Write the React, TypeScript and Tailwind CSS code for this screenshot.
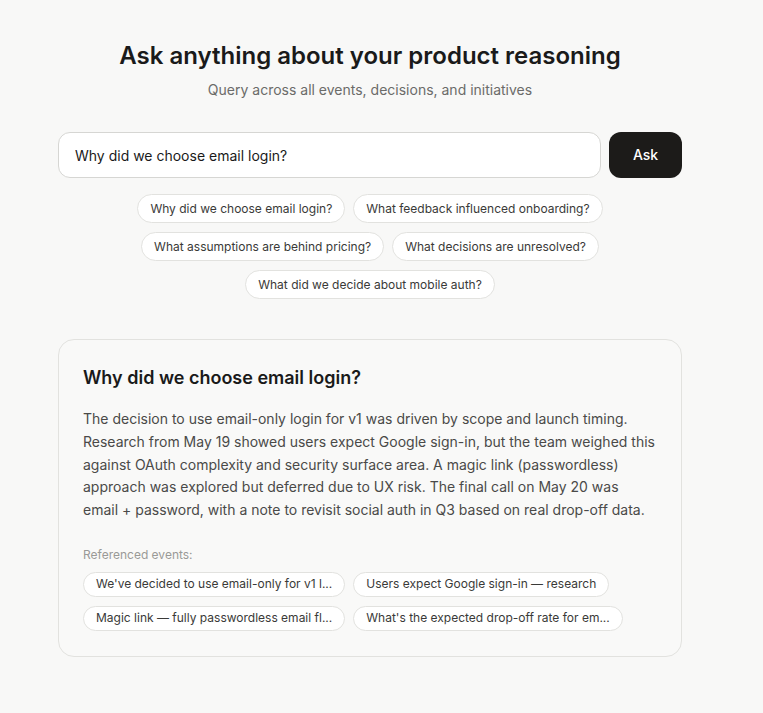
const suggestions = [
  "Why did we choose email login?",
  "What feedback influenced onboarding?",
  "What assumptions are behind pricing?",
  "What decisions are unresolved?",
  "What did we decide about mobile auth?",
]

const referenced = [
  "We've decided to use email-only for v1 l...",
  "Users expect Google sign-in — research",
  "Magic link — fully passwordless email fl...",
  "What's the expected drop-off rate for em...",
]

const App = () => {
  return (
    <div className="min-h-[713px] bg-[#f8f8f7] font-['Inter','Liberation_Sans',sans-serif] text-[#1a1a1a]">
      <div className="w-[740px] flex justify-center pt-10 pb-14">
        <div className="w-[624px] flex flex-col">
          {/* Header */}
          <h1 className="text-center text-2xl leading-8 font-semibold">
            Ask anything about your product reasoning
          </h1>
          <p className="text-center text-sm leading-5 text-[#6b6b69] mt-2">
            Query across all events, decisions, and initiatives
          </p>

          {/* Query */}
          <div className="flex gap-2 mt-8">
            <input
              defaultValue="Why did we choose email login?"
              className="flex-1 h-[46px] rounded-xl border border-[#d6d6d3] bg-white px-4 text-sm text-[#1a1a1a] outline-none"
            />
            <button className="w-[73px] h-[46px] rounded-xl bg-[#1c1b19] text-white text-sm font-medium">
              Ask
            </button>
          </div>

          {/* Suggestions */}
          <div className="flex flex-wrap justify-center gap-x-2 gap-y-[9px] mt-4">
            {suggestions.map((s) => (
              <button
                key={s}
                className="h-[29px] px-3 rounded-full border border-[#e2e2df] bg-white text-xs text-[#3a3a38]"
              >
                {s}
              </button>
            ))}
          </div>

          {/* Answer */}
          <div className="mt-10 rounded-2xl border border-[#e2e2df] bg-[#f9f9f8] px-6 pt-6 pb-[25px]">
            <h2 className="text-lg leading-7 font-semibold">Why did we choose email login?</h2>
            <p className="mt-4 text-sm leading-[22.75px] text-[#4a4a48]">
              The decision to use email-only login for v1 was driven by scope and launch timing. Research from May 19
              showed users expect Google sign-in, but the team weighed this against OAuth complexity and security
              surface area. A magic link (passwordless) approach was explored but deferred due to UX risk. The final
              call on May 20 was email + password, with a note to revisit social auth in Q3 based on real drop-off data.
            </p>
            <p className="mt-[25px] text-xs leading-4 text-[#9a9a97]">Referenced events:</p>
            <div className="flex flex-wrap gap-x-2 gap-y-[9px] mt-[9px]">
              {referenced.map((r) => (
                <span
                  key={r}
                  className="h-[25px] flex items-center px-3 rounded-full border border-[#e2e2df] bg-white text-xs text-[#3a3a38]"
                >
                  {r}
                </span>
              ))}
            </div>
          </div>
        </div>
      </div>
    </div>
  )
}

export default App
